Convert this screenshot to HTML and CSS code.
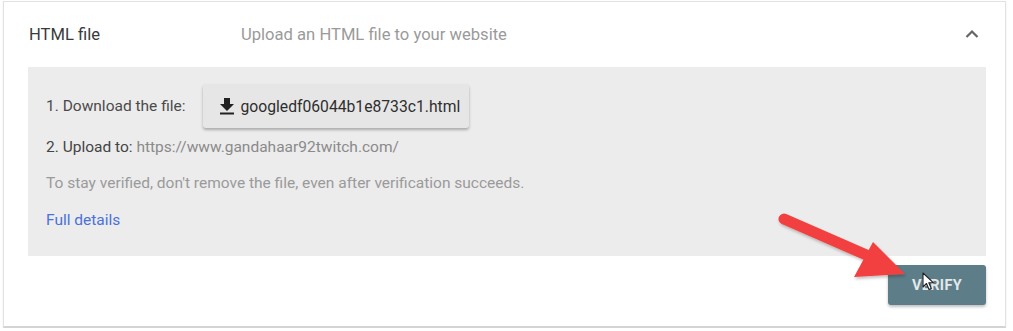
FILE: index.html
```html
<!DOCTYPE html>
<html>
<head>
<meta charset="utf-8">
<link rel="stylesheet" href="styles.css">
</head>
<body>
<div class="card">
  <div class="header">
    <div class="title">HTML file</div>
    <div class="summary">Upload an HTML file to your website</div>
    <svg class="chevron" width="14" height="10" viewBox="0 0 14 10"><path d="M1.5 8 L7 2.5 L12.5 8" fill="none" stroke="#666" stroke-width="2.2"/></svg>
  </div>
  <div class="panel">
    <div class="row row-dl">
      <span class="label">1. Download the file:</span>
      <button class="dl-btn">
        <svg width="16" height="18" viewBox="0 0 16 18"><path d="M5 1h6v6h4l-7 7-7-7h4z" fill="#222"/><rect x="1" y="15.5" width="14" height="2" fill="#222"/></svg>
        <span>googledf06044b1e8733c1.html</span>
      </button>
    </div>
    <div class="row row-up"><span class="strong">2. Upload to:</span> <span class="muted">https://www.gandahaar92twitch.com/</span></div>
    <div class="row row-note">To stay verified, don't remove the file, even after verification succeeds.</div>
    <div class="row row-link"><a class="link">Full details</a></div>
  </div>
  <div class="actions">
    <button class="verify">VERIFY</button>
  </div>
  <svg class="arrow" width="160" height="80" viewBox="0 0 160 80">
    <defs><filter id="sh" x="-20%" y="-20%" width="140%" height="140%"><feDropShadow dx="1" dy="2" stdDeviation="1.5" flood-color="#000" flood-opacity="0.25"/></filter></defs>
    <g filter="url(#sh)" fill="#f2403f">
      <line x1="8" y1="8" x2="95" y2="46" stroke="#f2403f" stroke-width="11" stroke-linecap="round"/>
      <polygon points="78,66 97,31 129,63"/>
    </g>
  </svg>
  <svg class="cursor" width="14" height="20" viewBox="0 0 14 20"><path d="M1 1 L1 15 L4.5 11.5 L7 17.5 L9.3 16.5 L6.8 10.8 L11.5 10.8 Z" fill="#fff" stroke="#222" stroke-width="1.1" stroke-linejoin="round"/></svg>
</div>
</body>
</html>
```
FILE: styles.css
```css
html, body {
  margin: 0;
  padding: 0;
  background: #ffffff;
}
body {
  font-family: Roboto, "Noto Sans", "Liberation Sans", sans-serif;
  padding: 1px 0 0 3px;
}
.card {
  position: relative;
  width: 1001px;
  height: 324px;
  border: 1px solid #e2e2e2;
  border-bottom: 2px solid #d4d4d4;
  box-shadow: 0 1px 2px rgba(0,0,0,0.08);
  background: #fff;
}
.header {
  display: flex;
  align-items: center;
  height: 65px;
  padding: 0 20px 0 25px;
}
.title {
  width: 212px;
  font-size: 16.6px;
  color: #3a3a3a;
}
.summary {
  flex: 1;
  font-size: 16.6px;
  color: #9a9a9a;
}
.chevron {
  margin-right: 6px;
  margin-top: -1px;
}
.panel {
  margin: 0 19px 0 24px;
  height: 189px;
  background: #ececec;
  padding: 17px 18px 0 18px;
  box-sizing: border-box;
}
.row {
  font-size: 15.5px;
  line-height: 18px;
  color: #505050;
}
.row-dl {
  display: flex;
  align-items: center;
  gap: 17px;
}
.label {
  color: #4a4a4a;
}
.dl-btn {
  display: flex;
  align-items: center;
  gap: 6px;
  height: 44px;
  width: 266px;
  padding: 0 0 0 16px;
  border: none;
  border-radius: 3px;
  background: #e6e6e6;
  box-shadow: 0 2px 3px rgba(0,0,0,0.28);
  font-family: inherit;
  font-size: 15.7px;
  color: #2e2e2e;
}
.row-up {
  margin-top: 10px;
}
.strong {
  color: #444;
}
.muted {
  color: #8a8a8a;
}
.row-note {
  margin-top: 18px;
  color: #9a9a9a;
}
.row-link {
  margin-top: 19px;
}
.link {
  color: #4a72d8;
}
.actions {
  display: flex;
  justify-content: flex-end;
  margin: 9px 19px 0 0;
}
.verify {
  width: 98px;
  height: 40px;
  border: none;
  border-radius: 3px;
  background: #5d7d88;
  box-shadow: 0 2px 3px rgba(0,0,0,0.25);
  color: #e4e8ea;
  font-family: inherit;
  font-weight: 700;
  font-size: 14.5px;
  letter-spacing: 0.3px;
}
.arrow {
  position: absolute;
  left: 772px;
  top: 209px;
}
.cursor {
  position: absolute;
  left: 918px;
  top: 270px;
}
```
